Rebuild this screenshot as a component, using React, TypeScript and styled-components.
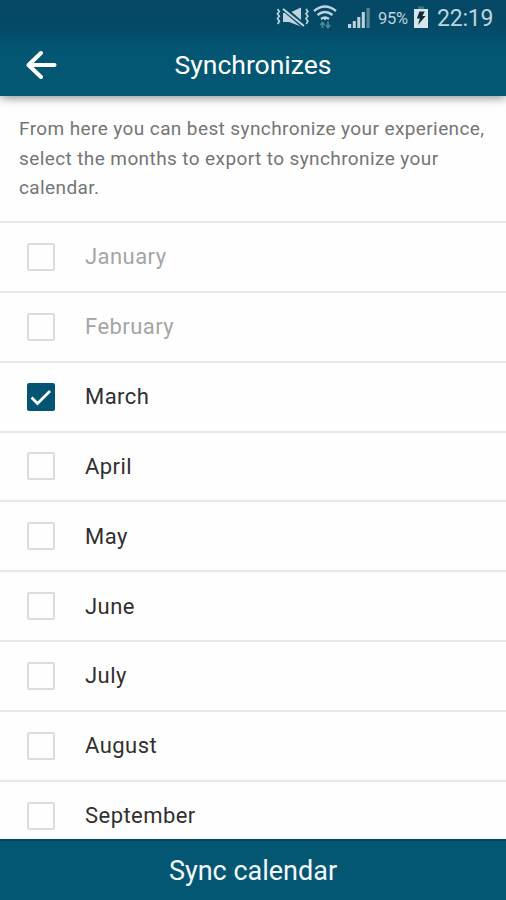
import React, { useState } from "react";
import styled, { createGlobalStyle } from "styled-components";

const GlobalStyle = createGlobalStyle`
  * { box-sizing: border-box; }
  body { margin: 0; background: #fff; font-family: Roboto, sans-serif; }
  button { font: inherit; border: 0; padding: 0; background: none; color: inherit; }
`;

const Screen = styled.div`
  display: flex;
  flex-direction: column;
  width: 506px;
  height: 900px;
  overflow: hidden;
  background: #fefefe;
`;

const TopArea = styled.header`
  flex: none;
  height: 96px;
  z-index: 1;
  background: linear-gradient(#044766 0, #044b67 30px, #04506c 37px, #045572 46px, #045773 60px);
  box-shadow: 0 1px 10px rgba(0, 0, 0, 0.52);
  color: #fff;
`;

const StatusBar = styled.div`
  display: flex;
  justify-content: flex-end;
  height: 36px;
  padding-right: 13px;
  color: #bfd3de;
`;

const StatusIcons = styled.svg`
  width: 106px;
  height: 36px;
  margin-right: 2px;
`;

const Percent = styled.span`
  width: 31px;
  font-size: 16.5px;
  line-height: 37px;
  letter-spacing: -0.3px;
  white-space: nowrap;
`;

const BatteryIcon = styled.svg`
  width: 16px;
  height: 36px;
  margin: 0 8px 0 4px;
`;

const Clock = styled.span`
  width: 56px;
  font-size: 23px;
  line-height: 37px;
  letter-spacing: -0.2px;
  white-space: nowrap;
`;

const AppBar = styled.div`
  display: grid;
  grid-template-columns: 82px 1fr 82px;
  align-items: center;
  height: 58px;
`;

const BackButton = styled.button`
  display: flex;
  padding-left: 24px;
`;

const Title = styled.h1`
  margin: 0;
  text-align: center;
  font-size: 26.5px;
  font-weight: 400;
  line-height: 32px;
`;

const Intro = styled.p`
  flex: none;
  height: 125px;
  margin: 0;
  padding: 18px 19px 0;
  font-size: 19px;
  line-height: 29.5px;
  letter-spacing: 0.4px;
  color: #757575;
  white-space: nowrap;
`;

const MonthList = styled.ul`
  flex: 1;
  min-height: 0;
  margin: 0;
  padding: 0;
  overflow: hidden;
  list-style: none;
`;

const MonthRow = styled.li<{ $disabled: boolean }>`
  display: flex;
  align-items: center;
  height: 69.85px;
  padding-left: 27px;
  border-top: 2px solid #e8e8e8;
  font-size: 22px;
  letter-spacing: 0.45px;
  color: ${(p) => (p.$disabled ? "#a5a5a5" : "#303030")};
`;

const Checkbox = styled.button<{ $checked: boolean }>`
  display: flex;
  align-items: center;
  justify-content: center;
  width: 28px;
  height: 28px;
  margin-right: 30px;
  border: 2px solid ${(p) => (p.$checked ? "#045573" : "#dcdcdc")};
  border-radius: 2px;
  background: ${(p) => (p.$checked ? "#045573" : "transparent")};
`;

const SyncButton = styled.button`
  flex: none;
  height: 61px;
  && {
    border-top: 2px solid #074663;
    background: #045773;
    color: #f4f8fc;
    font-size: 27px;
    line-height: 32px;
  }
`;

const months = ["January", "February", "March", "April", "May", "June", "July", "August", "September"];

export default function App() {
  const [selected, setSelected] = useState<string[]>(["March"]);
  const toggle = (month: string) =>
    setSelected((s) => (s.includes(month) ? s.filter((m) => m !== month) : [...s, month]));

  return (
    <Screen>
      <GlobalStyle />
      <TopArea>
        <StatusBar>
          <StatusIcons viewBox="270 0 106 36" fill="none" stroke="currentColor">
            <path d="M277.5 9l1.8 2.4-1.8 2.4 1.8 2.4-1.8 2.4 1.8 2.4-1.5 3M306 9l1.8 2.4-1.8 2.4 1.8 2.4-1.8 2.4 1.8 2.4-1.5 3" strokeWidth="1.7" />
            <path d="M283 13h6l12-5.5v19L289 22h-6z" fill="currentColor" stroke="none" />
            <path d="M283 8l21 18" stroke="#044966" strokeWidth="5" />
            <path d="M283 9l21 17" strokeWidth="2.2" />
            <path d="M314 11q11-9 22 0M317.5 15q7.5-6 15 0M321 19q4-3 8 0" strokeWidth="2.3" />
            <path d="M325 20.5l-2-2.2q2-1.6 4 0z" fill="currentColor" stroke="none" />
            <path d="M322.5 28v-5M320.3 25l2.2-2.5 2.2 2.5M328 21.5v5.5M325.8 25l2.2 2.5 2.2-2.5" stroke="#4d899f" strokeWidth="1.6" />
            <path d="M348 24h3.2v4H348zM352.8 21h3v7h-3zM357.3 17h3v11h-3zM361.8 12h3v16h-3z" fill="currentColor" stroke="none" />
            <path d="M366.5 8h3.2v20h-3.2z" fill="#568499" stroke="none" />
          </StatusIcons>
          <Percent>95%</Percent>
          <BatteryIcon viewBox="0 0 16 36">
            <path d="M5 6.5h6V9H5z" fill="#37758d" />
            <path d="M1 9h14v19H1z" fill="#d7e6ed" />
            <path d="M6.5 11.5h5.2L9.4 16h3.2L5 25l1.8-6.5H3.8z" fill="#102a38" />
          </BatteryIcon>
          <Clock>22:19</Clock>
        </StatusBar>
        <AppBar>
          <BackButton aria-label="Back">
            <svg width="34" height="32" viewBox="0 0 34 32" fill="none" stroke="#fff" strokeWidth="4" strokeLinecap="round" strokeLinejoin="round">
              <path d="M30.5 16H5M17 4L4.5 16 17 28" />
            </svg>
          </BackButton>
          <Title>Synchronizes</Title>
        </AppBar>
      </TopArea>
      <Intro>
        From here you can best synchronize your experience,
        <br />
        select the months to export to synchronize your
        <br />
        calendar.
      </Intro>
      <MonthList>
        {months.map((month, i) => {
          const checked = selected.includes(month);
          return (
            <MonthRow key={month} $disabled={i < 2}>
              <Checkbox
                role="checkbox"
                aria-checked={checked}
                aria-label={month}
                disabled={i < 2}
                $checked={checked}
                onClick={() => toggle(month)}
              >
                {checked && (
                  <svg width="24" height="24" viewBox="0 0 24 24" fill="none" stroke="#fff" strokeWidth="2.8">
                    <path d="M2.5 12.5L8.5 18.5 21 6" />
                  </svg>
                )}
              </Checkbox>
              {month}
            </MonthRow>
          );
        })}
      </MonthList>
      <SyncButton>Sync calendar</SyncButton>
    </Screen>
  );
}
